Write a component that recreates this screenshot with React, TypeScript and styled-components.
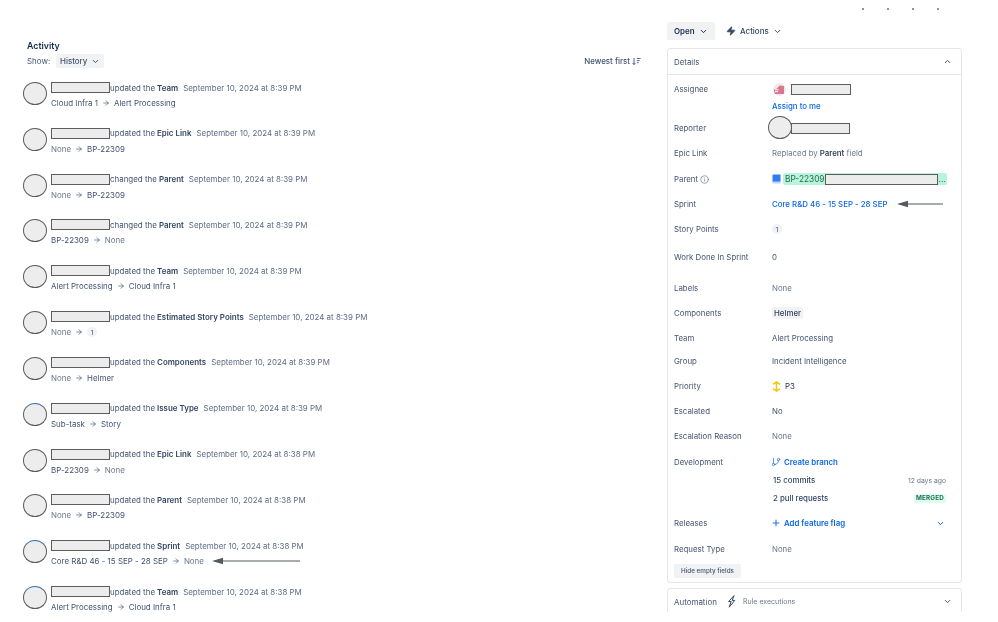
import React from 'react';
import styled, { createGlobalStyle } from 'styled-components';
import { ArrowRight, ChevronDown, ChevronUp, GitBranch, Info, Plus, Zap } from 'lucide-react';

const GlobalStyle = createGlobalStyle`
  html, body {
    margin: 0;
    padding: 0;
    background: #ffffff;
  }
  body {
    font-family: Inter, "Liberation Sans", sans-serif;
    font-size: 7.95px;
    color: #172b4d;
  }
`;

const Page = styled.div`
  width: 998px;
  height: 612px;
  overflow: hidden;
  display: flex;
  background: #ffffff;
  filter: blur(0.3px);
`;

const ActivityColumn = styled.section`
  width: 641px;
  padding: 40px 0 0 27px;
  box-sizing: border-box;
  flex-shrink: 0;
`;

const Title = styled.h2`
  margin: 0;
  font-size: 8.8px;
  line-height: 11px;
  font-weight: 600;
  color: #172b4d;
`;

const Toolbar = styled.div`
  display: flex;
  align-items: center;
  margin-top: 3px;
  height: 14px;
  color: #44546f;
`;

const ShowLabel = styled.span`
  width: 29px;
`;

const SelectButton = styled.button`
  display: flex;
  align-items: center;
  justify-content: space-between;
  width: 48px;
  height: 14px;
  padding: 0 4px;
  border: 0;
  border-radius: 2px;
  background: #f1f2f4;
  color: #44546f;
  font: 500 7.95px Inter, sans-serif;
`;

const SortLabel = styled.span`
  margin-left: auto;
  display: flex;
  align-items: center;
  gap: 2px;
  font-weight: 500;
  color: #44546f;
`;

const ActivityList = styled.div`
  margin: 14px 0 0 -4px;
`;

const ActivityRow = styled.div`
  display: flex;
  align-items: flex-start;
  height: 45.83px;
  gap: 4px;
`;

const Avatar = styled.span<{ $ring?: boolean }>`
  width: 24px;
  height: 23px;
  box-sizing: border-box;
  flex-shrink: 0;
  border-radius: 50%;
  background: #ededed;
  border: 1.5px solid #5c5c5c;
  border-top-color: ${props => (props.$ring ? '#3f6fb0' : '#5c5c5c')};
`;

const RowBody = styled.div`
  display: flex;
  flex-direction: column;
  gap: 4.5px;
`;

const HeadLine = styled.div`
  display: flex;
  align-items: center;
  height: 11px;
  white-space: nowrap;
  color: #44546f;
`;

const Redacted = styled.span<{ $width: number }>`
  display: inline-block;
  width: ${props => props.$width}px;
  height: 11px;
  box-sizing: border-box;
  flex-shrink: 0;
  background: #ececec;
  border: 1.5px solid #5c5c5c;
`;

const Strong = styled.b`
  font-weight: 600;
  color: #344563;
  margin-left: 2px;
`;

const Stamp = styled.span`
  margin-left: 5px;
  color: #5e6c84;
`;

const ChangeLine = styled.div`
  display: flex;
  align-items: center;
  gap: 4px;
  height: 11px;
  white-space: nowrap;
`;

const ChangeValue = styled.span<{ $muted?: boolean }>`
  color: ${props => (props.$muted ? '#6b778c' : '#42526e')};
`;

const Pointer = styled.svg<{ $gap: number }>`
  margin-left: ${props => props.$gap}px;
  flex-shrink: 0;
`;

const SideColumn = styled.aside`
  width: 295px;
  margin-left: 26px;
  flex-shrink: 0;
`;

const TopMarks = styled.div`
  display: flex;
  justify-content: flex-end;
  gap: 23px;
  height: 22px;
  padding: 8px 23px 0 0;
  box-sizing: border-box;
`;

const Mark = styled.i`
  width: 2px;
  height: 1.5px;
  background: #8c93a0;
`;

const ActionBar = styled.div`
  display: flex;
  align-items: center;
  gap: 11px;
  height: 18px;
  margin-bottom: 8px;
`;

const StatusButton = styled.button`
  display: flex;
  align-items: center;
  justify-content: space-between;
  width: 48px;
  height: 18px;
  padding: 0 7px;
  box-sizing: border-box;
  border: 0;
  border-radius: 2px;
  background: #f1f2f4;
  color: #172b4d;
  font: 600 7.95px Inter, sans-serif;
`;

const ActionsButton = styled.span`
  display: flex;
  align-items: center;
  gap: 4px;
  font-weight: 500;
  color: #344563;
`;

const Card = styled.div`
  border: 1px solid #e4e6ea;
  border-radius: 3px;
  box-sizing: border-box;
`;

const CardHeader = styled.div`
  display: flex;
  align-items: center;
  justify-content: space-between;
  height: 25px;
  padding: 0 9px 0 6px;
  border-bottom: 1px solid #e4e6ea;
  font-size: 7.9px;
  color: #44546f;
`;

const CardBody = styled.div`
  padding: 7px 15px 4px 6px;
`;

const Field = styled.div<{ $top: number }>`
  display: grid;
  grid-template-columns: 98px 1fr;
  align-items: center;
  height: 14px;
  margin-top: ${props => props.$top}px;
  font-size: 7.85px;
`;

const Label = styled.span`
  color: #44546f;
  display: flex;
  align-items: center;
  gap: 2px;
`;

const Value = styled.div`
  display: flex;
  align-items: center;
  height: 14px;
  white-space: nowrap;
  color: #172b4d;
`;

const MutedText = styled.span`
  color: #6b778c;
`;

const SubtleText = styled.span`
  color: #44546f;
`;

const LinkText = styled.a<{ $bold?: boolean }>`
  color: #0c66e4;
  font-weight: ${props => (props.$bold ? 600 : 500)};
`;

const AssigneePic = styled.svg`
  margin: 0 5px 0 1px;
  flex-shrink: 0;
`;

const ReporterAvatar = styled(Avatar)`
  margin: -5px -1px -4px -4px;
  position: relative;
  z-index: 1;
`;

const ParentLozenge = styled.span`
  display: flex;
  align-items: center;
  width: 164px;
  height: 12px;
  margin-left: 2px;
  padding-left: 2px;
  box-sizing: border-box;
  border-radius: 2px;
  background: #baf3db;
  color: #216e4e;
  font-size: 8.3px;
`;

const ParentEnd = styled.span`
  margin-left: 1px;
`;

const Count = styled.span`
  display: flex;
  align-items: center;
  justify-content: center;
  width: 10px;
  height: 10px;
  border-radius: 50%;
  background: #f1f2f4;
  font-size: 6.8px;
  color: #44546f;
`;

const Tag = styled.span`
  padding: 1px 2px;
  border-radius: 2px;
  background: #f1f2f4;
  font-weight: 500;
  color: #344563;
`;

const PriorityName = styled.span`
  margin-left: 4px;
`;

const DevLine = styled.div`
  display: flex;
  align-items: center;
  justify-content: space-between;
  width: 100%;
  padding-left: 1px;
  font-weight: 500;
  color: #344563;
`;

const Ago = styled.span`
  font-size: 6.8px;
  font-weight: 400;
  color: #6b778c;
`;

const Merged = styled.span`
  padding: 0 2px;
  border-radius: 2px;
  background: #dcfff1;
  color: #216e4e;
  font-size: 6.3px;
  line-height: 9px;
  font-weight: 700;
  letter-spacing: 0.2px;
`;

const IconLink = styled.div`
  display: flex;
  align-items: center;
  gap: 3px;
  width: 100%;
  margin-left: -1px;
`;

const PushRight = styled.span`
  margin-left: auto;
  display: flex;
`;

const HideButton = styled.button`
  display: block;
  width: 67px;
  height: 14px;
  margin-top: 8px;
  padding: 0;
  border: 0;
  border-radius: 2px;
  background: #f1f2f4;
  color: #44546f;
  font: 500 6.3px Inter, sans-serif;
`;

const AutomationCard = styled(Card)`
  display: flex;
  align-items: center;
  height: 30px;
  margin-top: 5px;
  padding: 0 9px 3px 6px;
`;

const AutomationTitle = styled.span`
  width: 53px;
  color: #44546f;
`;

const RuleText = styled.span`
  margin-left: 7px;
  font-size: 7px;
  color: #6b778c;
`;

type Activity = {
  verb: string;
  field: string;
  time: string;
  from: string;
  to: string;
  ring?: boolean;
  pointer?: boolean;
};

const t39 = 'September 10, 2024 at 8:39 PM';
const t38 = 'September 10, 2024 at 8:38 PM';

const activities: Activity[] = [
  { verb: 'updated the', field: 'Team', time: t39, from: 'Cloud Infra 1', to: 'Alert Processing' },
  { verb: 'updated the', field: 'Epic Link', time: t39, from: 'None', to: 'BP-22309' },
  { verb: 'changed the', field: 'Parent', time: t39, from: 'None', to: 'BP-22309' },
  { verb: 'changed the', field: 'Parent', time: t39, from: 'BP-22309', to: 'None' },
  { verb: 'updated the', field: 'Team', time: t39, from: 'Alert Processing', to: 'Cloud Infra 1' },
  { verb: 'updated the', field: 'Estimated Story Points', time: t39, from: 'None', to: '1' },
  { verb: 'updated the', field: 'Components', time: t39, from: 'None', to: 'Helmer' },
  { verb: 'updated the', field: 'Issue Type', time: t39, from: 'Sub-task', to: 'Story', ring: true },
  { verb: 'updated the', field: 'Epic Link', time: t38, from: 'BP-22309', to: 'None' },
  { verb: 'updated the', field: 'Parent', time: t38, from: 'None', to: 'BP-22309' },
  { verb: 'updated the', field: 'Sprint', time: t38, from: 'Core R&D 46 - 15 SEP - 28 SEP', to: 'None', ring: true, pointer: true },
  { verb: 'updated the', field: 'Team', time: t38, from: 'Alert Processing', to: 'Cloud Infra 1', ring: true },
];

const SortIcon = () => (
  <svg width="9" height="9" viewBox="0 0 9 9" fill="none" stroke="#44546f" strokeWidth="0.9">
    <path d="M2 1v6.5M0.6 6L2 7.6 3.4 6M4.8 1.5h3.8M4.8 3.6h2.8M4.8 5.7h1.8" />
  </svg>
);

const LeftPointer = ({ width, gap }: { width: number; gap: number }) => (
  <Pointer $gap={gap} width={width} height="8" viewBox={`0 0 ${width} 8`}>
    <path d="M0 4L11 0.8V3.5H100V4.5H11V7.2Z" fill="#555a60" />
  </Pointer>
);

const BookIcon = () => (
  <svg width="9" height="10" viewBox="0 0 9 10">
    <path d="M1.8 0.5H8.5V7.8H1.8C1 7.8 0.5 8 0.5 8.4V1.8C0.5 1 1 0.5 1.8 0.5Z" fill="#2f7df0" />
    <path d="M0.5 8.4C0.5 8 1 7.8 1.8 7.8H8.5V9.4H1.8C1 9.4 0.5 9 0.5 8.4Z" fill="#b9d4fb" />
  </svg>
);

const PriorityIcon = () => (
  <svg width="9" height="11" viewBox="0 0 9 11" fill="none" stroke="#f5c518" strokeWidth="1.5">
    <path d="M1 3.4L4.5 0.9 8 3.4M4.5 1v9M1 7.6l3.5 2.5L8 7.6" />
  </svg>
);

const RuleIcon = () => (
  <svg width="9" height="13" viewBox="0 0 9 13" fill="none" stroke="#344563" strokeWidth="1">
    <path d="M7 0.6L1.6 6.6h2.6L2.2 12.2 7.8 5.4H5.2L7 0.6Z" />
  </svg>
);

export default function App() {
  return (
    <>
      <GlobalStyle />
      <Page>
        <ActivityColumn>
          <Title>Activity</Title>
          <Toolbar>
            <ShowLabel>Show:</ShowLabel>
            <SelectButton>
              History <ChevronDown size={9} strokeWidth={2.6} />
            </SelectButton>
            <SortLabel>
              Newest first <SortIcon />
            </SortLabel>
          </Toolbar>
          <ActivityList>
            {activities.map((item, index) => (
              <ActivityRow key={index}>
                <Avatar $ring={item.ring} />
                <RowBody>
                  <HeadLine>
                    <Redacted $width={59} />
                    {item.verb}
                    <Strong>{item.field}</Strong>
                    <Stamp>{item.time}</Stamp>
                  </HeadLine>
                  <ChangeLine>
                    <ChangeValue $muted={item.from === 'None'}>{item.from}</ChangeValue>
                    <ArrowRight size={8} color="#42526e" />
                    {item.to === '1' ? (
                      <Count>1</Count>
                    ) : (
                      <ChangeValue $muted={item.to === 'None'}>{item.to}</ChangeValue>
                    )}
                    {item.pointer && <LeftPointer width={88} gap={4} />}
                  </ChangeLine>
                </RowBody>
              </ActivityRow>
            ))}
          </ActivityList>
        </ActivityColumn>

        <SideColumn>
          <TopMarks>
            <Mark />
            <Mark />
            <Mark />
            <Mark />
          </TopMarks>
          <ActionBar>
            <StatusButton>
              Open <ChevronDown size={9} strokeWidth={2.6} />
            </StatusButton>
            <ActionsButton>
              <Zap size={10} strokeWidth={2} fill="#344563" />
              Actions
              <ChevronDown size={9} strokeWidth={2.6} />
            </ActionsButton>
          </ActionBar>

          <Card>
            <CardHeader>
              Details
              <ChevronUp size={9} strokeWidth={2.6} color="#44546f" />
            </CardHeader>
            <CardBody>
              <Field $top={0}>
                <Label>Assignee</Label>
                <Value>
                  <AssigneePic width="13" height="13" viewBox="0 0 13 13">
                    <circle cx="6.5" cy="6.5" r="6.5" fill="#f4e8ea" />
                    <path d="M1 8V6.5L4 5.5 6.5 2.5 11 3V11H2Z" fill="#d9778e" />
                    <path d="M2 6.8h3.6M2 8.6h3" stroke="#ffffff" strokeWidth="1" />
                  </AssigneePic>
                  <Redacted $width={60} />
                </Value>
              </Field>
              <Field $top={3}>
                <span />
                <Value>
                  <LinkText>Assign to me</LinkText>
                </Value>
              </Field>
              <Field $top={8}>
                <Label>Reporter</Label>
                <Value>
                  <ReporterAvatar />
                  <Redacted $width={59} />
                </Value>
              </Field>
              <Field $top={11}>
                <Label>Epic Link</Label>
                <Value>
                  <MutedText>Replaced by</MutedText>
                  <Strong>Parent</Strong>
                  <MutedText>&nbsp;field</MutedText>
                </Value>
              </Field>
              <Field $top={12}>
                <Label>
                  Parent <Info size={9} strokeWidth={1.4} />
                </Label>
                <Value>
                  <BookIcon />
                  <ParentLozenge>
                    BP-22309
                    <Redacted $width={113} />
                    <ParentEnd>...</ParentEnd>
                  </ParentLozenge>
                </Value>
              </Field>
              <Field $top={11}>
                <Label>Sprint</Label>
                <Value>
                  <LinkText>Core R&amp;D 46 - 15 SEP - 28 SEP</LinkText>
                  <LeftPointer width={46} gap={10} />
                </Value>
              </Field>
              <Field $top={11}>
                <Label>Story Points</Label>
                <Value>
                  <Count>1</Count>
                </Value>
              </Field>
              <Field $top={14}>
                <Label>Work Done In Sprint</Label>
                <Value>
                  <SubtleText>0</SubtleText>
                </Value>
              </Field>
              <Field $top={17}>
                <Label>Labels</Label>
                <Value>
                  <MutedText>None</MutedText>
                </Value>
              </Field>
              <Field $top={11}>
                <Label>Components</Label>
                <Value>
                  <Tag>Helmer</Tag>
                </Value>
              </Field>
              <Field $top={11}>
                <Label>Team</Label>
                <Value>
                  <SubtleText>Alert Processing</SubtleText>
                </Value>
              </Field>
              <Field $top={9}>
                <Label>Group</Label>
                <Value>
                  <SubtleText>Incident Intelligence</SubtleText>
                </Value>
              </Field>
              <Field $top={11}>
                <Label>Priority</Label>
                <Value>
                  <PriorityIcon />
                  <PriorityName>P3</PriorityName>
                </Value>
              </Field>
              <Field $top={11}>
                <Label>Escalated</Label>
                <Value>
                  <SubtleText>No</SubtleText>
                </Value>
              </Field>
              <Field $top={11}>
                <Label>Escalation Reason</Label>
                <Value>
                  <MutedText>None</MutedText>
                </Value>
              </Field>
              <Field $top={12}>
                <Label>Development</Label>
                <Value>
                  <IconLink>
                    <GitBranch size={10} color="#0c66e4" strokeWidth={1.6} />
                    <LinkText $bold>Create branch</LinkText>
                  </IconLink>
                </Value>
              </Field>
              <Field $top={4}>
                <span />
                <Value>
                  <DevLine>
                    15 commits <Ago>12 days ago</Ago>
                  </DevLine>
                </Value>
              </Field>
              <Field $top={4}>
                <span />
                <Value>
                  <DevLine>
                    2 pull requests <Merged>MERGED</Merged>
                  </DevLine>
                </Value>
              </Field>
              <Field $top={11}>
                <Label>Releases</Label>
                <Value>
                  <IconLink>
                    <Plus size={10} color="#0c66e4" strokeWidth={2.2} />
                    <LinkText $bold>Add feature flag</LinkText>
                    <PushRight>
                      <ChevronDown size={9} strokeWidth={2.6} color="#0c66e4" />
                    </PushRight>
                  </IconLink>
                </Value>
              </Field>
              <Field $top={12}>
                <Label>Request Type</Label>
                <Value>
                  <MutedText>None</MutedText>
                </Value>
              </Field>
              <HideButton>Hide empty fields</HideButton>
            </CardBody>
          </Card>

          <AutomationCard>
            <AutomationTitle>Automation</AutomationTitle>
            <RuleIcon />
            <RuleText>Rule executions</RuleText>
            <PushRight>
              <ChevronDown size={9} strokeWidth={2.6} color="#44546f" />
            </PushRight>
          </AutomationCard>
        </SideColumn>
      </Page>
    </>
  );
}
